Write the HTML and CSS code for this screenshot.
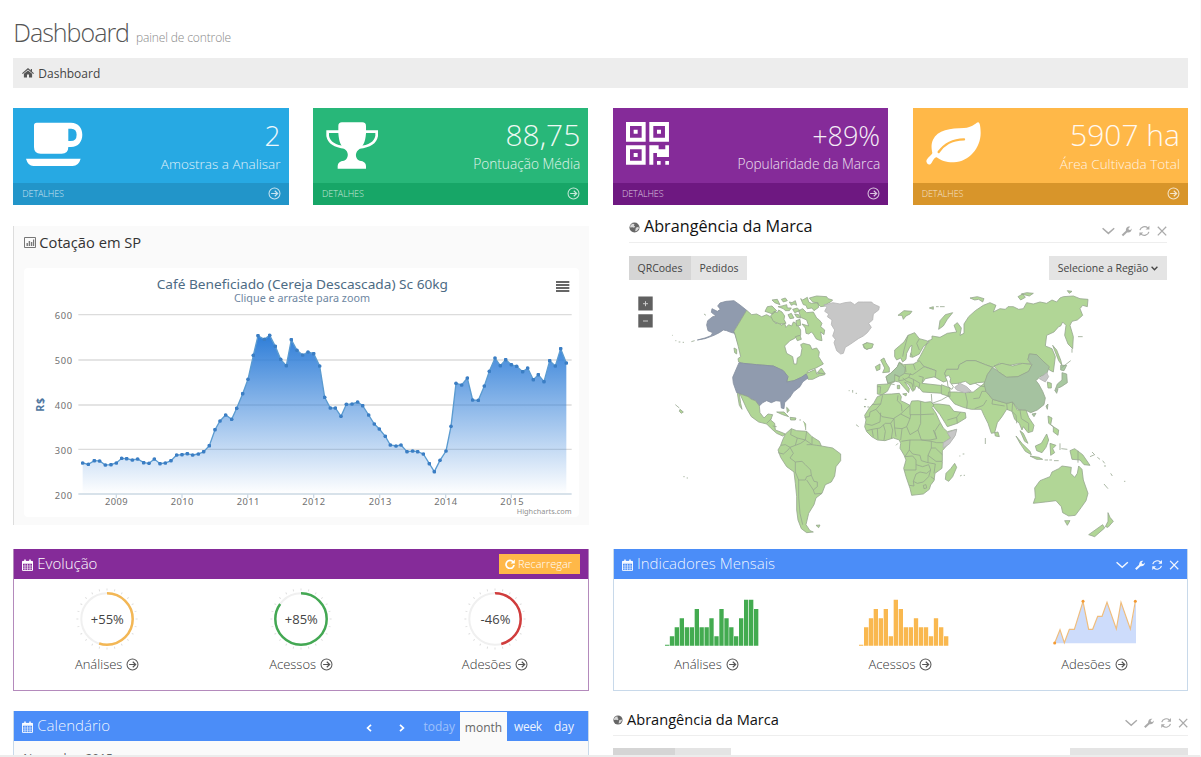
FILE: index.html
```html
<!DOCTYPE html>
<html lang="pt-BR">
<head>
<meta charset="utf-8">
<title>Dashboard</title>
<link rel="stylesheet" href="styles.css">
</head>
<body>
<svg class="defs" width="0" height="0">
  <defs>
    <symbol id="i-arrow" viewBox="0 0 14 14"><circle cx="7" cy="7" r="5.9" fill="none" stroke="currentColor" stroke-width="1.1"/><path d="M3.4 7h6.8M7.3 4l3.1 3-3.1 3" fill="none" stroke="currentColor" stroke-width="1.3"/></symbol>
    <symbol id="i-home" viewBox="0 0 12 10"><path d="M6 2.4 1.9 5.8V9.5H5V6.6h2v2.9h3.1V5.8z" fill="currentColor"/><path d="M.4 5.6 6 .9l5.6 4.7M9.4 1v3" fill="none" stroke="currentColor" stroke-width="1.2"/></symbol>
    <symbol id="i-chart" viewBox="0 0 12 11"><path d="M.5.5h11v10H.5z" fill="none" stroke="currentColor"/><path d="M2.5 6h1.4v3H2.5zM4.7 4h1.4v5H4.7zM6.9 5h1.4v4H6.9zM9 2.5h1.2V9H9z" fill="currentColor"/></symbol>
    <symbol id="i-globe" viewBox="0 0 10 10"><circle cx="5" cy="5" r="4.6" fill="currentColor"/><path d="M1.2 3.2 3 1.6l2 .2-.6 1.3L5.6 4l-1 1.3-1.3-.5L1 5zM6.2 5.2l2.4-.8.4 1.4L7.2 8 5.6 8.4z" fill="#fff" opacity=".75"/></symbol>
    <symbol id="i-cal" viewBox="0 0 11 12"><path d="M.5 2.4h10v9H.5z" fill="none" stroke="currentColor"/><path d="M.5 2h10v2.8H.5zM2.2.6h1.6v3H2.2zM7.2.6h1.6v3H7.2z" fill="currentColor"/><path d="M.5 7h10M.5 9.2h10M3 5v6.4M5.5 5v6.4M8 5v6.4" stroke="currentColor" stroke-width=".6"/></symbol>
    <symbol id="i-tools" viewBox="0 0 66 12"><g fill="none" stroke="currentColor" stroke-width="1.5"><path d="M.6 3.2 6.4 8.4l5.8-5.2"/><path d="M20.4 10.4l5-4.6" stroke-width="2.1"/><path d="M37.9 5.2A4.800 4.800 0 0 1 45.800 2.900M46.900 6.800A4.800 4.800 0 0 1 39 9.100" stroke-width="1.200"/><path d="M55.800 1.800l8.400 8.600M64.200 1.800l-8.400 8.600" stroke-width="1.300"/></g><path d="M24 6C23.400 3.200 25.600 1 28.200 1.700L26.400 3.400l.4 1.400 1.500.2 1.400-1.600C30 6.200 27.400 8 25.200 7.200zM47.400.8v3.800h-3.800zM37.400 11.200V7.400H41.200z" fill="currentColor"/></symbol>
    <linearGradient id="area" gradientUnits="userSpaceOnUse" x1="0" y1="362" x2="0" y2="838"><stop offset="0" stop-color="#2f7ed8"/><stop offset="1" stop-color="#2f7ed8" stop-opacity="0"/></linearGradient>
    <marker id="dot" viewBox="0 0 12 12" refX="6" refY="6" markerWidth="12" markerHeight="12" markerUnits="userSpaceOnUse"><circle cx="6" cy="6" r="5.6" fill="#3b7ec4"/></marker>
  </defs>
</svg>

<main class="page">
  <header class="title"><h1>Dashboard</h1><small>painel de controle</small></header>
  <nav class="crumb"><svg width="12" height="10"><use href="#i-home"/></svg><span>Dashboard</span></nav>

  <section class="cards">
    <article class="card blue">
      <div class="card-main">
        <svg width="57.3" height="44.7" viewBox="78 370 172 134"><path fill="#fff" fill-rule="evenodd" d="M102 380q0-8 8-8H213C235 372 247 388 247 408S235 445 213 445H205Q205 465 185 465H122Q102 465 102 445ZM205 390V427H212Q230 427 230 408T212 390ZM78 480H242Q236 502 218 502H100Q84 502 78 480Z"/></svg>
        <div class="card-text"><b class="n28">2</b><span class="tight">Amostras a Analisar</span></div>
      </div>
      <footer>DETALHES<svg width="13" height="13"><use href="#i-arrow"/></svg></footer>
    </article>
    <article class="card green">
      <div class="card-main">
        <svg width="52" height="47" viewBox="77 62 156 141"><path fill="#fff" d="M114 74Q114 63 125 63H186Q197 63 197 74V96C195 125 187 137 174 146C162 156 166 174 178 178Q197 180 197 194V202H112V194Q112 180 131 178C143 174 147 156 136 146C123 137 116 125 114 96Z"/><path fill="none" stroke="#fff" stroke-width="8" d="M118 91H82V104Q88 134 134 138M193 91H229V104Q223 134 177 138"/></svg>
        <div class="card-text"><b class="n30">88,75</b><span>Pontuação Média</span></div>
      </div>
      <footer>DETALHES<svg width="13" height="13"><use href="#i-arrow"/></svg></footer>
    </article>
    <article class="card purple">
      <div class="card-main">
        <svg width="43.3" height="43" viewBox="78 62 130 129"><path fill="#fff" fill-rule="evenodd" d="M78 62h59v59H78zM90 74v35h35V74zM101 85h12v12h-12zM148 62h59v59h-59zM160 74v35h35V74zM171 85h12v12h-12zM78 132h59v58H78zM90 144v34h35v-34zM101 155h12v12h-12zM148 132h28v12h20v-12h11v35h-36v-12h-11v35h-12zM171 179h11v11h-11zM196 179h11v11h-11z"/></svg>
        <div class="card-text"><b class="n26">+89%</b><span>Popularidade da Marca</span></div>
      </div>
      <footer>DETALHES<svg width="13" height="13"><use href="#i-arrow"/></svg></footer>
    </article>
    <article class="card orange">
      <div class="card-main">
        <svg width="55" height="43" viewBox="76 62 165 129"><path fill="#fff" d="M232 63C222 67 215 79 190 80C150 81 110 86 97 115C90 130 93 145 95 155C93 162 78 170 77 180C80 192 88 192 93 184C98 176 102 167 108 168C120 178 140 184 160 183C205 181 240 140 240 95C240 80 238 62 232 63Z"/><path d="M114 152C130 130 150 115 190 114" fill="none" stroke="#ffb848" stroke-width="7" stroke-linecap="round"/></svg>
        <div class="card-text"><b class="n30">5907 ha</b><span class="tight">Área Cultivada Total</span></div>
      </div>
      <footer>DETALHES<svg width="13" height="13"><use href="#i-arrow"/></svg></footer>
    </article>
  </section>

  <div class="columns">
    <div class="col">
      <section class="quote">
        <h2><svg width="12" height="11"><use href="#i-chart"/></svg>Cotação em SP</h2>
        <svg class="chart" width="555" height="249" viewBox="72 160 1665 747">
          <rect x="72" y="160" width="1665" height="747" rx="12" fill="#fff"/>
          <path d="M235 300H1715M235 436H1715M235 571H1715M235 704H1715" stroke="#dcdcdc" stroke-width="4"/>
          <path d="M235 838H1715M349 838v12M546 838v12M743 838v12M941 838v12M1139 838v12M1337 838v12M1534 838v12" stroke="#ccd9e4" stroke-width="4" fill="none"/>
          <path fill="url(#area)" d="M248 838V745L265 749 283 738 299 739 316 751 333 750 349 745 365 731 380 732 397 736 413 733 431 744 447 746 463 733 480 747 496 745 513 738 530 721 546 720 562 717 578 721 595 718 611 711 628 693 645 645 660 619 677 601 695 614 710 581 728 537 744 494 760 422 774 363 793 374 809 362 826 395 842 434 859 453 874 375 891 407 908 421 924 412 941 417 959 454 974 548 991 580 1006 580 1023 605 1039 569 1056 568 1073 562 1088 573 1106 601 1123 628 1138 643 1156 665 1171 691 1188 694 1203 691 1221 711 1238 709 1253 711 1270 718 1288 747 1303 771 1320 737 1338 709 1353 635 1368 506 1385 511 1402 490 1418 556 1435 557 1453 514 1468 470 1485 430 1501 453 1517 435 1534 450 1550 455 1568 471 1583 460 1600 495 1615 480 1632 501 1649 438 1666 454 1682 402 1699 445V838Z"/>
          <polyline fill="none" stroke="#5b9bd0" stroke-width="4" marker-start="url(#dot)" marker-mid="url(#dot)" marker-end="url(#dot)" points="248,745 265,749 283,738 299,739 316,751 333,750 349,745 365,731 380,732 397,736 413,733 431,744 447,746 463,733 480,747 496,745 513,738 530,721 546,720 562,717 578,721 595,718 611,711 628,693 645,645 660,619 677,601 695,614 710,581 728,537 744,494 760,422 774,363 793,374 809,362 826,395 842,434 859,453 874,375 891,407 908,421 924,412 941,417 959,454 974,548 991,580 1006,580 1023,605 1039,569 1056,568 1073,562 1088,573 1106,601 1123,628 1138,643 1156,665 1171,691 1188,694 1203,691 1221,711 1238,709 1253,711 1270,718 1288,747 1303,771 1320,737 1338,709 1353,635 1368,506 1385,511 1402,490 1418,556 1435,557 1453,514 1468,470 1485,430 1501,453 1517,435 1534,450 1550,455 1568,471 1583,460 1600,495 1615,480 1632,501 1649,438 1666,454 1682,402 1699,445"/>
          <g class="chart-title"><text x="470" y="223" textLength="874" lengthAdjust="spacingAndGlyphs">Café Beneficiado (Cereja Descascada) Sc 60kg</text></g>
          <g class="chart-sub"><text x="702" y="261" textLength="408" lengthAdjust="spacingAndGlyphs">Clique e arraste para zoom</text></g>
          <g class="axis">
            <text x="164" y="313" textLength="52">600</text><text x="164" y="448" textLength="52">500</text><text x="164" y="583" textLength="52">400</text><text x="164" y="717" textLength="52">300</text><text x="164" y="852" textLength="52">200</text>
            <text x="315" y="872" textLength="68">2009</text><text x="512" y="872" textLength="68">2010</text><text x="710" y="872" textLength="68">2011</text><text x="907" y="872" textLength="68">2012</text><text x="1106" y="872" textLength="68">2013</text><text x="1303" y="872" textLength="68">2014</text><text x="1501" y="872" textLength="70">2015</text>
          </g>
          <text class="credit" x="1550" y="898" textLength="165">Highcharts.com</text>
          <text class="unit" transform="translate(131 591) rotate(-90)" textLength="41">R$</text>
          <path d="M1668 202h40M1668 211h40M1668 220h40M1668 229h40" stroke="#666" stroke-width="6"/>
        </svg>
      </section>

      <section class="panel purple-panel">
        <h2><svg width="11" height="12"><use href="#i-cal"/></svg>Evolução<button class="reload"><svg width="10" height="10" viewBox="0 0 10 10"><path d="M8.2 3A4 4 0 1 0 9 6" fill="none" stroke="#fff" stroke-width="1.7"/><path d="M9.8.4v4.2H5.6z" fill="#fff"/></svg>Recarregar</button></h2>
        <div class="trio">
          <div><svg width="64" height="64" viewBox="-32 -32 64 64" class="knob"><circle class="ticks" r="29.6" pathLength="240"/><circle class="track" r="25.7"/><circle class="arc" r="25.7" pathLength="100" stroke="#f3b755" stroke-dasharray="55 45"/><text class="pct" x="-16.2" y="5.3" textLength="33">+55%</text></svg><a>Análises<svg width="13" height="13"><use href="#i-arrow"/></svg></a></div>
          <div><svg width="64" height="64" viewBox="-32 -32 64 64" class="knob"><circle class="ticks" r="29.6" pathLength="240"/><circle class="track" r="25.7"/><circle class="arc" r="25.7" pathLength="100" stroke="#43a853" stroke-dasharray="85 15"/><text class="pct" x="-16.2" y="5.3" textLength="33">+85%</text></svg><a>Acessos<svg width="13" height="13"><use href="#i-arrow"/></svg></a></div>
          <div><svg width="64" height="64" viewBox="-32 -32 64 64" class="knob"><circle class="ticks" r="29.6" pathLength="240"/><circle class="track" r="25.7"/><circle class="arc" r="25.7" pathLength="100" stroke="#d03c3c" stroke-dasharray="46 54"/><text class="pct" x="-14.6" y="5.3" textLength="30">-46%</text></svg><a>Adesões<svg width="13" height="13"><use href="#i-arrow"/></svg></a></div>
        </div>
      </section>

      <section class="panel blue-panel calendar">
        <h2><svg width="11" height="12"><use href="#i-cal"/></svg>Calendário
          <span class="cal-nav">
            <svg class="prev" width="6" height="8" viewBox="0 0 6 8"><path d="M5 .8 1.6 4 5 7.2" fill="none" stroke="#fff" stroke-width="1.7"/></svg>
            <svg class="next" width="6" height="8" viewBox="0 0 6 8"><path d="M1 .8 4.4 4 1 7.2" fill="none" stroke="#fff" stroke-width="1.7"/></svg>
            <i class="today">today</i><i class="month">month</i><i class="week">week</i><i class="day">day</i>
          </span></h2>
        <p>November 2015</p>
      </section>
    </div>

    <div class="col">
      <section class="map-box">
        <h2><svg width="11" height="11"><use href="#i-globe"/></svg>Abrangência da Marca<svg class="tools" width="66" height="12"><use href="#i-tools"/></svg></h2>
        <div class="map-bar"><button class="on">QRCodes</button><button class="off">Pedidos</button><button class="region">Selecione a Região<svg width="7" height="5" viewBox="0 0 7 5"><path d="M.6.8 3.5 3.8 6.4.8" fill="none" stroke="#444" stroke-width="1.3"/></svg></button></div>
        <svg class="map" width="538" height="264" viewBox="629 280 538 264">
          <g fill="#606060"><path d="M638.3 296.6h14.4v14h-14.4zM638.3 314.3h14.4v13.2h-14.4z"/><path d="M643 303.7h5M645.5 301.2v5M643 321h5" stroke="#ccc"/></g>
          <g transform="translate(610 210) scale(.33333)" class="land">
            <path class="us" d="M410 301 390 285 372 272 348 274 330 279 323 288 331 298 322 304 306 296 304 307 318 318 308 320 293 332 290 345 294 362 308 368 303 377 285 384 262 390 285 386 312 376 328 368 340 360 350 362 362 367 378 371 387 385 389 408 384 400 376 376 372 364Z"/>
            <path d="M410 301 425 314 440 312 455 320 470 314 488 324 498 342 506 332 514 346 524 340 528 352 536 344 545 348 550 336 556 338 566 350 572 360 572 376 560 380 552 386 540 392 524 408 530 430 548 440 552 462 560 462 562 444 572 438 576 415 572 404 580 400 600 405 606 418 620 414 628 426 626 440 640 462 618 474 596 482 590 490 616 478 620 492 640 488 644 494 628 498 608 508 594 508 590 494 574 502 552 512 530 516 534 500 520 482 490 468 440 464 400 460 386 456 384 446 392 440 385 410 376 376 372 364Z"/>
            <path d="M465 304 472 290 486 288 500 302 488 312ZM482 318 492 304 502 308 506 300 516 306 524 318 522 328 528 340 510 342 490 334ZM486 270 502 268 510 284 494 278ZM514 268 526 264 532 272 520 276ZM504 290 516 288 530 284 532 294 544 294 538 302 526 302 520 296ZM538 276 546 278 556 272 560 286 552 282 544 286ZM534 314 544 310 552 324 540 326ZM566 302 578 296 590 308 610 306 620 324 628 330 636 340 632 350 644 360 642 374 632 366 636 392 626 390 618 386 610 372 604 366 596 372 588 370 586 354 576 342 596 348 590 330 572 322ZM572 266 578 270 592 262 596 276 604 280 624 278 626 292 612 302 606 294 592 296 588 286 580 284ZM598 264 620 258 650 260 654 266 668 270 662 276 650 282 646 288 632 290 620 278 608 276ZM558 332 570 328 572 346 560 348ZM556 380 570 376 574 388 562 392ZM622 488 634 474 646 492ZM548 298 562 294 570 302 554 308ZM554 312 566 314 572 324 560 322ZM372 414 380 418 380 432 374 428Z"/>
            <path class="none" d="M642 284 656 282 668 278 690 282 704 278 722 276 734 284 745 276 760 276 785 276 790 282 808 290 806 300 790 312 788 330 776 340 784 352 772 368 760 378 745 386 722 402 706 412 700 430 692 432 680 422 672 398 676 388 668 378 674 360 664 344 666 330 652 320 656 312 644 304 650 292Z"/>
            <path class="us" d="M387 458 400 460 440 464 490 468 520 482 534 500 530 516 552 512 574 502 588 492 594 504 578 516 570 530 550 546 540 562 524 578 522 596 514 594 512 574 498 572 484 578 470 572 458 578 448 588 436 572 424 568 414 560 380 548 370 520 368 502Z"/>
            <path d="M382 550 388 552 392 580 396 598 388 586ZM390 552 414 560 424 568 436 572 448 588 450 608 462 624 474 612 488 614 482 630 494 640 496 660 512 666 526 672 518 678 500 670 484 656 470 642 446 636 424 620 410 596Z"/>
            <path d="M526 672 544 656 560 662 590 664 606 680 628 694 634 708 668 714 692 732 692 752 678 770 674 798 664 816 646 824 636 850 618 864 612 884 596 910 588 944 600 962 610 966 590 968 574 956 564 930 560 900 560 860 556 820 552 786 530 770 512 742 504 720 512 706 518 690Z"/>
            <path fill="none" d="M544 656 542 674 562 684 556 706 540 712 526 704 512 706M562 684 586 690 590 664M590 704 606 704 606 680M556 706 572 700 586 690 606 704 620 706 634 708M504 728 520 732 534 720 540 712 550 730 540 744 556 756 556 786 566 810 566 860 570 910 578 944M556 756 576 754 586 764 602 780 604 796 590 800 586 810 566 810M604 796 612 814 622 816 622 830 610 840 590 810M610 840 614 852 636 850M500 650 488 648M470 640 484 626"/>
            <path d="M500 606 522 606 536 620 518 614ZM540 622 558 624 556 630 542 630ZM530 592 538 600 532 608ZM568 630h5M580 634l7 8v18M196 584l12 10M210 598l10 8-6 4-6-6ZM220 800h4M230 804h4M618 946l12-1-4 8ZM186 376h2M196 392h3M206 396h5M218 397h4M244 395l10-3M282 312l6 4M716 542h3M728 540v8M737 550h4M766 566v4M762 590h5M738 644l8 6M760 404 770 398 786 408 772 418 762 414Z"/>
          </g>
          <g transform="translate(860 210) scale(.33333)" class="land">
            <path d="M180 428 190 410 208 396 200 392 178 386 164 368 144 376 132 396 118 408 104 420 104 440 110 450 122 444 128 456 138 448 140 430 150 410 156 406 154 424 150 440 158 442 178 432ZM205 392 216 388 216 378 240 382 262 370 290 366 282 346 292 338 304 354 300 376 312 370 312 342 326 320 346 302 370 286 390 278 408 286 400 306 420 296 436 298 444 290 460 290 476 298 490 296 500 278 520 282 540 276 560 280 576 270 590 276 600 264 610 260 640 258 660 266 684 268 682 290 668 286 660 296 668 316 652 330 636 334 630 346 640 380 638 416 624 402 614 376 618 346 608 336 602 348 596 350 582 366 560 376 556 408 576 416 586 440 580 486 568 480 556 462 530 434 508 432 504 448 512 462 480 460 448 466 418 460 398 472 376 464 346 452 320 452 298 464 294 478 260 478 254 490 262 512 250 516 222 500 228 482 190 468 172 452 180 440Z"/>
            <path d="M236 358 240 332 256 314 278 308 262 328 250 348ZM114 316 132 302 156 304 150 312 138 318 130 328 126 316ZM208 294 220 290 220 298ZM228 290h8M240 290h14M330 264 352 260 372 266 368 276 356 268 344 270ZM474 260 488 252 496 262 482 270ZM484 252 500 248 520 250 508 258ZM622 242 636 244 628 250ZM654 380h14M578 406 590 420 602 450 606 466 596 452Z"/>
            <path d="M8 404 22 398 40 402 36 414 18 418ZM62 450 72 444 78 458 88 474 88 486 68 488 74 474ZM46 470 60 462 60 478 50 482Z"/>
            <path d="M52 524 84 522 78 500 92 490 112 470 118 456 130 464 160 462 178 452 192 470 228 482 226 500 196 506 186 520 204 522 240 526 264 540 246 550 216 548 188 546 178 534 168 528 164 540 158 544 146 524 134 516 148 536 146 548 130 530 118 516 106 514 94 520 82 544 66 554 52 552ZM128 552 140 550 138 558ZM112 526h7v10h-7z"/>
            <path class="deep" d="M112 470 118 458 128 466 136 474 134 490 118 500 104 494 104 514 90 518 84 520 78 500 92 490Z"/>
            <path fill="none" d="M52 530 62 530 60 550M84 520 104 524M104 494 118 500 116 512 130 510 146 502 160 508 180 520M134 490 158 494 170 486 192 470M136 466 138 486M146 502 152 490M160 462 166 480M160 508 162 530M176 498 190 502 186 518M180 520 176 536M152 430 158 440M178 386 170 400 178 420M144 376 138 398 132 420 128 440M128 504 140 514 156 520 160 540"/>
            <path d="M294 478 298 464 320 452 346 452 376 464 398 472 382 494 378 516 352 518 330 524 316 514 294 520 268 522 262 512 254 490 260 478Z"/><path class="sea" d="M256 500 266 496 272 506 270 516 280 530 276 538 264 530 262 514Z"/>
            <path d="M266 546 286 546 316 548 340 546 378 516 378 544 398 568 440 580 458 576 472 600 480 600 498 600 506 622 522 646 518 664 504 668 490 650 486 660 478 640 464 628 456 604 440 598 426 620 412 638 404 668 394 670 384 640 372 616 364 598 334 598 310 592 284 582 264 558ZM244 524 270 534 270 560 244 552Z"/>
            <path fill="none" d="M316 548 322 576 320 596M340 566 358 564 366 544 378 544M344 596 370 586 380 570M398 568 396 582 434 588M440 580 442 600M458 576 456 604 468 616 470 640M480 600 484 626 506 640 506 664M294 520 330 548M346 520 360 528 376 530M214 552 216 580 244 570 268 556"/>
            <path class="none" d="M284 532 300 520 320 530 334 544 314 548 290 540Z"/>
            <path d="M214 582 236 582 268 586 282 604 316 608 318 624 292 640 262 650 256 640 240 614Z"/><path fill="none" d="M262 630 290 622 302 606M292 640 290 622"/>
            <path d="M402 468 426 460 458 468 488 460 516 464 506 484 474 500 440 502 416 486Z"/>
            <path class="china" d="M398 472 416 486 440 502 474 500 506 484 516 464 504 448 508 432 530 434 552 456 568 470 560 492 540 500 528 512 536 522 548 544 556 564 552 584 532 600 512 608 496 600 474 598 458 576 440 580 398 568 378 544 372 522 382 494Z"/>
            <path class="none" d="M538 506 560 488 566 500 556 516Z"/><path d="M562 516 574 520 574 534 564 534ZM404 668 414 666 418 680 406 678Z"/>
            <path class="deep" d="M602 466 620 466 612 482 602 480ZM606 488 620 492 622 518 604 530 586 538 592 522 606 510ZM584 540 594 538 590 550ZM558 588 564 582 562 598ZM516 612 528 610 522 620Z"/>
            <path d="M468 678 486 700 510 724 514 734 496 724 480 700ZM480 662 490 670 504 700 494 694ZM510 738 536 742 548 748 530 748ZM554 750h10M568 750h8M582 752h14M526 708 544 700 560 672 566 690 558 712 546 728 530 722ZM570 700 588 706 578 716 584 728 572 736ZM564 618 576 624 572 644 580 650 566 640ZM580 650 596 660 594 676 580 666ZM600 700v20M604 716 622 718M630 722 644 716 668 734 690 766 672 764 660 750 636 748Z"/>
            <path fill="none" d="M654 722V758M690 740 704 734 696 726M712 742l8 6M728 752l6 8M732 768h6M752 790l5 8M732 822 744 836M792 814h4M376 684v18M300 798l5-2M311 796h4M308 732h5M298 738h3M636 416v12M604 474 632 452M14 568h6M12 590h5M22 591h6M108 706l6-6"/>
            <path d="M524 834 540 812 570 800 576 786 596 776 606 768 634 772 632 790 644 802 652 790 656 768 666 778 670 810 684 850 678 872 664 892 646 916 626 918 608 908 604 890 588 872 556 876 520 880 526 862ZM614 932 630 932 622 946ZM744 908 750 922 760 934 744 952 736 950 744 934ZM728 944 734 954 704 980 686 974Z"/>
            <path class="africa" d="M52 560 70 553 95 552 118 550 124 560 122 572 135 578 150 586 155 573 175 572 195 577 212 575 222 585 216 592 228 610 240 636 250 654 262 665 290 658 283 680 262 705 247 722 247 755 246 775 225 790 222 812 212 825 208 838 190 852 155 856 150 835 138 800 131 775 138 750 132 735 120 715 122 700 118 690 100 684 75 692 52 690 35 680 20 665 14 650 18 630 14 616 28 594 42 578ZM284 760 290 772 278 800 266 814 256 808 258 790 272 776Z"/>
            <path fill="none" d="M68 556 62 582 36 584M62 582 48 598 30 606 28 620 14 622M48 598 66 620 100 626 122 612 150 586M62 608 60 636 36 646 18 642M114 556 112 572 124 584 126 604M182 574 182 614M150 586 150 614 182 614 222 612M122 612 150 626 140 650 126 656 104 654 102 626 92 640 76 640 60 654 36 658 20 662M92 640 98 660 94 686M70 644 76 664 72 690M52 656 54 688M36 658 40 680M104 654 108 680M126 656 122 690M150 626 152 614M140 650 150 674 174 660 182 640 182 614M174 660 184 690 210 690 230 686 224 664 240 640M184 690 214 694 230 698 250 698 272 684 262 668M230 686 220 660M124 694 150 690 184 690M150 690 148 720 136 738M148 720 158 732 180 736 184 752 204 758 204 736 214 714 214 694M214 714 226 714 247 734M204 736 228 754 246 754M134 740 158 738 168 750 168 780 132 780M168 764 188 770 206 764 212 780 200 790 180 786 168 792 160 814 172 820 190 816 206 800 212 780M160 814 162 828 148 826M204 758 226 762 222 790M190 826 198 824 200 834 192 836ZM212 800 224 808"/>
            <path class="none" d="M262 668 290 658 286 676 268 702 249 714 250 698 272 684Z"/>
          </g>
        </svg>
      </section>

      <section class="panel blue-panel monthly">
        <h2><svg width="11" height="12"><use href="#i-cal"/></svg>Indicadores Mensais<svg class="tools" width="64" height="12"><use href="#i-tools"/></svg></h2>
        <div class="trio">
          <div><svg class="spark first" width="94" height="47" viewBox="197 178 282 141"><path fill="#43ab50" d="M197 318v-3h13v3zM211.5 318V290h13v28zM226 318V263h13v55zM241 318V236h13v82zM256 318V263h13v55zM271 318V263h13v55zM286 318V208h13v110zM300.5 318V263h13v55zM315.5 318V263h13v55zM330 318V236h13v82zM345 318V290h13v28zM360 318V208h13v110zM375 318V236h13v82zM389.5 318V263h13v55zM404 318V290h13v28zM419 318V236h13v82zM434 318V180h13v138zM449 318V180h13v138zM464 318V208h13v110z"/></svg><a>Análises<svg width="13" height="13"><use href="#i-arrow"/></svg></a></div>
          <div><svg class="spark mid" width="90" height="47" viewBox="777 178 270 141"><path fill="#f9b84f" d="M777 318v-3h13v3zM792 318V263h13v55zM806.5 318V236h13v82zM821 318V208h13v110zM836 318V236h13v82zM851 318V208h13v110zM866 318V290h13v28zM881 318V180h13v138zM896 318V208h13v110zM911 318V263h13v55zM926 318V263h13v55zM941.5 318V236h13v82zM956.5 318V263h13v55zM971.5 318V263h13v55zM986.5 318V290h13v28zM1001.5 318V236h13v82zM1017 318V263h13v55zM1032 318V290h13v28z"/></svg><a>Acessos<svg width="13" height="13"><use href="#i-arrow"/></svg></a></div>
          <div><svg class="spark last" width="85" height="47" viewBox="458 178 255 141"><path fill="#cddcfb" d="M463 311 479 270 492 309 507 269 522 269 548 186 565 269 577 269 592 230 605 230 620 188 648 268 662 188 690 268 707 185V311Z"/><path fill="none" stroke="#f0bd7c" stroke-width="3.5" d="M463 310 479 270 492 309 507 269 522 269 548 186 565 269 577 269 592 230 605 230 620 188 648 268 662 188 690 268 705 185"/><g fill="#f39a32"><circle cx="463" cy="310" r="4.5"/><circle cx="548" cy="185" r="4.5"/><circle cx="705" cy="185" r="4.5"/></g></svg><a>Adesões<svg width="13" height="13"><use href="#i-arrow"/></svg></a></div>
        </div>
      </section>

      <section class="map-box second">
        <h2><svg width="10" height="10"><use href="#i-globe"/></svg>Abrangência da Marca<svg class="tools" width="64" height="12"><use href="#i-tools"/></svg></h2>
        <div class="map-bar"><button class="on"></button><button class="off"></button><button class="region"></button></div>
      </section>
    </div>
  </div>
</main>
</body>
</html>
```
FILE: styles.css
```css
* { box-sizing: border-box; }
body { margin: 0; background: #fff; font-family: "Open Sans", "Liberation Sans", sans-serif; color: #444; }
h1, h2, p { margin: 0; font-weight: 400; }
button { border: 0; padding: 0; font: inherit; color: inherit; border-radius: 0; }
svg { display: block; flex: none; }
.defs { position: absolute; }
.page { height: 757px; overflow: hidden; padding: 0 12.5px 0 13.3px; border-right: 1px solid #fafafa; border-bottom: 2px solid #ececec; }

.title { display: flex; align-items: baseline; height: 58px; padding-top: 15px; }
.title h1 { font-size: 25px; line-height: 34px; font-weight: 300; color: #555; letter-spacing: -1px; }
.title small { font-size: 12px; font-weight: 300; color: #888; margin-left: 7px; letter-spacing: -.13px; }
.crumb { display: flex; align-items: center; height: 30px; padding-left: 9px; gap: 4px; background: #ededed; font-size: 12px; color: #444; }
.crumb svg { color: #555; }

.cards { display: grid; grid-template-columns: repeat(4, 1fr); gap: 24.6px; margin-top: 20px; width: 1174.7px; }
.card { height: 97px; color: #fff; }
.card-main { display: flex; justify-content: space-between; height: 75px; padding: 14px 8px 0 13px; }
.card-text { display: flex; flex-direction: column; align-items: flex-end; justify-content: flex-end; margin-top: -14px; padding-bottom: 9px; font-weight: 300; }
.card-text b { font-weight: 300; line-height: 34px; margin-bottom: 2px; opacity: .92; }
.card-text span { font-size: 13.7px; line-height: 20px; opacity: .85; }
.card-text .tight { font-size: 13.5px; }
.n28 { font-size: 28px; }
.n30 { font-size: 30px; }
.n26 { font-size: 27px; }
.card .n26 { line-height: 32px; }
.card footer { display: flex; align-items: center; justify-content: space-between; height: 22px; padding: 0 8px 1px 9px; font-size: 9px; font-weight: 300; color: rgba(255,255,255,.75); letter-spacing: -.1px; }
.blue { background: #27a9e3; } .blue footer { background: #2295c9; }
.green { background: #28b779; } .green footer { background: #17a667; }
.purple { background: #852b99; } .purple footer { background: #6e1881; }
.orange { background: #ffb848; } .orange footer { background: #d8952a; }

.columns { display: grid; grid-template-columns: 575.7px 575px; gap: 24px; width: 1174.7px; margin-top: 11px; }
.col { display: flex; flex-direction: column; }
h2 { display: flex; align-items: center; }
.quote { height: 299px; margin-top: 10px; background: #fafafa; border-left: 1px solid #ddd; padding: 0 10px; }
.quote h2 { height: 42px; font-size: 14.7px; color: #333; gap: 3px; padding-bottom: 11px; }
.quote h2 svg { color: #777; margin-top: 2px; }
.chart { font-family: "Noto Sans", "DejaVu Sans", sans-serif; }
.chart-title { font-size: 40px; fill: #4d6b84; }
.chart-sub { font-size: 31px; fill: #6d869f; }
.axis { font-size: 28px; fill: #707070; }
.credit { font-size: 22px; fill: #909090; }
.unit { font-size: 32px; font-weight: 700; fill: #4d759e; }

.panel { height: 142px; margin-top: 24px; }
.panel h2 { height: 30px; padding: 0 8px 3px; gap: 4px; font-size: 15px; font-weight: 300; line-height: 26px; color: #fff; }
.panel h2 > svg:first-child { margin-top: 4px; }
.purple-panel { border: 1px solid #b48abc; border-top: 0; }
.purple-panel h2 { background: #852b99; }
.blue-panel { border: 1px solid #c8d9ea; border-top: 0; }
.blue-panel h2 { background: #4b8df8; color: rgba(255,255,255,.92); }
.reload { display: flex; align-items: center; gap: 3px; width: 81px; height: 20px; margin-left: auto; padding-left: 6px; margin-top: 3px; background: #ffb848; font-size: 11px; font-weight: 300; line-height: 18px; color: #fff; }
.tools { margin-left: auto; color: #aaa; }
.panel .tools { color: rgba(255,255,255,.92); }
.monthly .tools { margin-right: -1px; margin-top: 5px; }
.trio { display: grid; grid-template-columns: repeat(3, 194px); justify-content: center; justify-items: center; padding-top: 8px; }
.trio > div { display: flex; flex-direction: column; align-items: center; }
.trio a { display: flex; align-items: center; gap: 4px; font-size: 13px; line-height: 20px; font-weight: 300; color: #333; margin-top: 3px; }
.trio a svg { color: #555; }
.knob circle { fill: none; }
.ticks { stroke: #ddd; stroke-width: 2; stroke-dasharray: 1.2 8.8; stroke-dashoffset: .6; }
.track { stroke: #f0f0f0; stroke-width: 2; }
.arc { stroke-width: 2.5; transform: rotate(-90deg); }
.pct { font-size: 13px; fill: #444; font-weight: 400; }
.spark { margin: 12px 0 5px; }
.spark.first { margin-left: 12px; }
.spark.mid { margin-left: 7px; }
.spark.last { margin-left: 2px; }

.calendar { height: 60px; margin-top: 20px; background: #fafafa; }
.cal-nav { display: flex; align-items: center; align-self: stretch; margin-left: auto; margin-right: -8px; margin-bottom: -3px; font-size: 12px; }
.cal-nav i { font-style: normal; line-height: 30px; padding-top: 1px; height: 30px; font-weight: 400; }
.cal-nav svg { margin-top: 4px; }
.next { margin-left: 27px; }
.cal-nav .today { margin-left: 18px; width: 36.5px; opacity: .5; }
.month { width: 47px; background: #fafafa; color: #666; text-align: center; margin-top: 1px; }
.week { padding-left: 7px; width: 47px; letter-spacing: -.3px; }
.day { width: 34px; }
.calendar p { padding: 9px 9px 0; font-size: 12px; line-height: 17px; color: #666; }

.map-box { height: 310px; margin: -1px 21px 0 16px; }
.map-box h2 { height: 28px; padding-bottom: 5px; font-size: 16.2px; gap: 4px; color: #111; border-bottom: 1px solid #eee; }
.map-box h2 svg:first-child { color: #666; margin-top: 2px; }
.map-box .tools { margin-top: 9px; margin-right: -1px; }
.map-bar { display: flex; margin-top: 13px; height: 24px; font-size: 10.5px; color: #444; }
.on { width: 62px; background: #d5d5d5; }
.off { width: 56px; background: #e4e4e4; }
.region { display: flex; align-items: center; justify-content: center; gap: 3px; width: 118px; margin-left: auto; background: #e4e4e4; font-size: 10.5px; }
.land { stroke: #96a68e; stroke-width: 2.4; fill: #b1d696; stroke-linejoin: round; }
.us { fill: #909bae; stroke: #858fa0; }
.none { fill: #c7c7c7; stroke: #b4b4b4; }
.sea { fill: #fff; }
.china { fill: #a5c2a0; }
.deep { fill: #a8c8a0; }
.map-box.second { margin: 16px 0 0; height: 60px; }
.second h2 { height: 29px; font-size: 14.6px; }
.map-box.second .tools { margin-right: -1px; }
.second .map-bar { margin-top: 12px; }
```
